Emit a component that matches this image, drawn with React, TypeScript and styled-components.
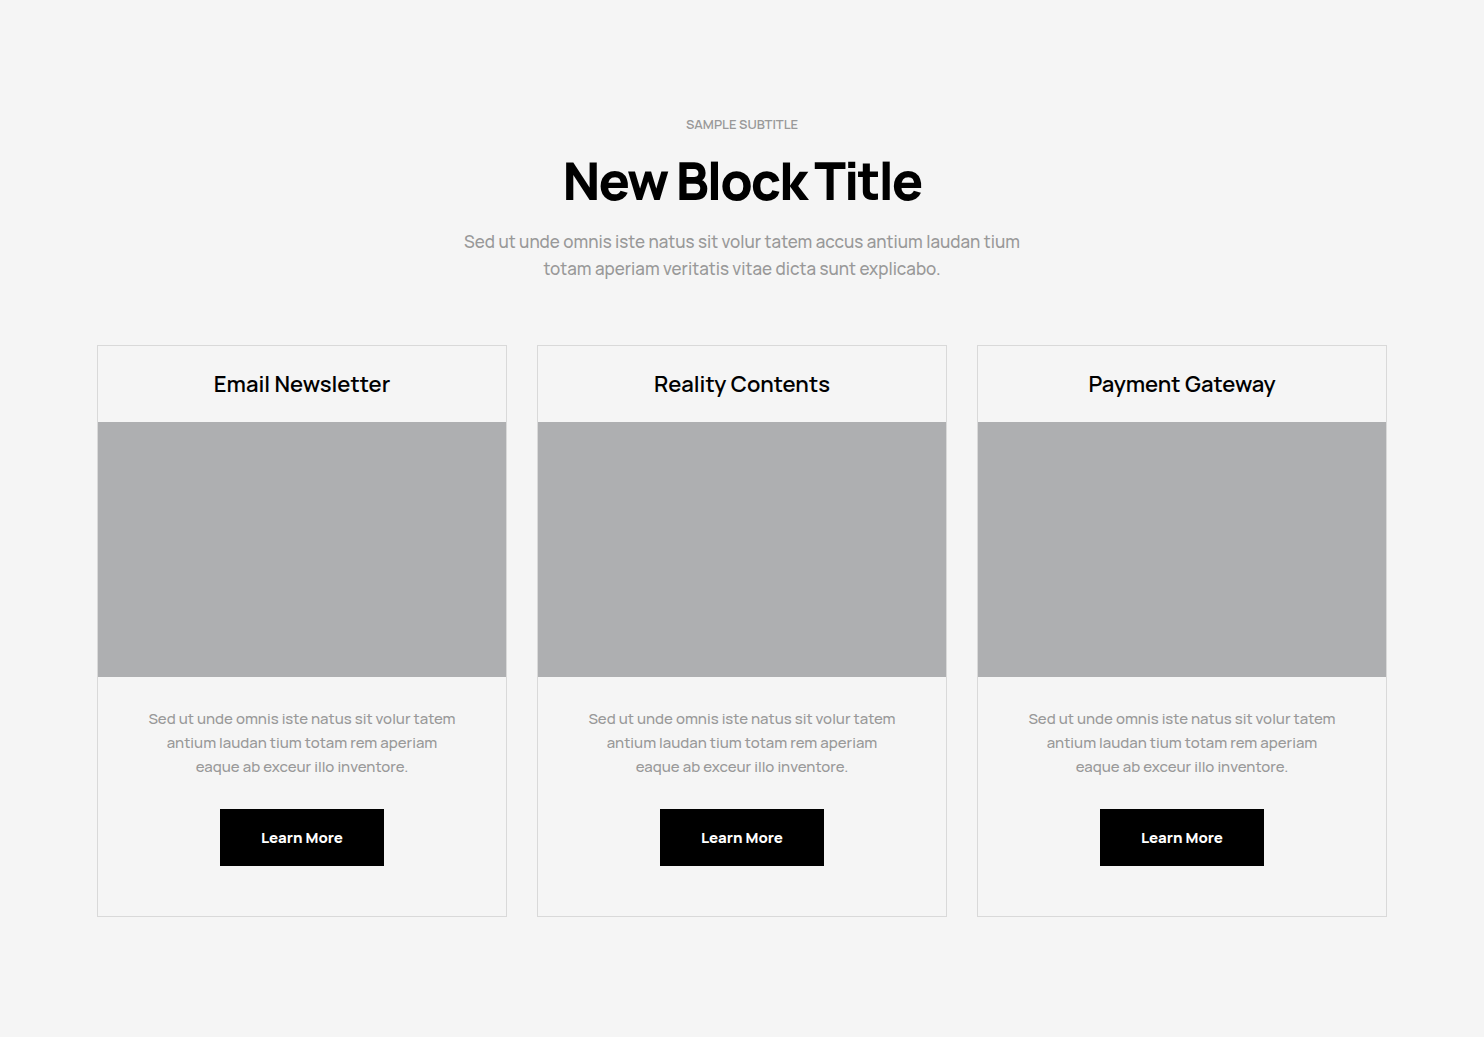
import React from "react";
import styled, { createGlobalStyle } from "styled-components";

const GlobalStyle = createGlobalStyle`
  *, *::before, *::after { box-sizing: border-box; }
  body {
    margin: 0;
    background: #f5f5f5;
    color: #000;
    font-family: Manrope, Inter, "Open Sans", sans-serif;
    font-variant-ligatures: none;
  }
`;

const Section = styled.section`
  padding: 112px 32px 120px;
`;

const Container = styled.div`
  max-width: 1290px;
  margin: 0 auto;
`;

const Header = styled.header`
  display: flex;
  flex-direction: column;
  align-items: center;
  max-width: 600px;
  margin: 0 auto 63px;
  text-align: center;
`;

const Subtitle = styled.p`
  margin: 0 0 15px;
  color: #999;
  font-size: 13px;
  font-weight: 600;
  line-height: 24px;
  text-transform: uppercase;
`;

const Title = styled.h2`
  margin: 0 0 17px;
  font-size: 52px;
  font-weight: 800;
  line-height: 60px;
  letter-spacing: -2px;
`;

const Lead = styled.p`
  margin: 0;
  color: #999;
  font-size: 17px;
  font-weight: 500;
  line-height: 27px;
`;

const Grid = styled.div`
  display: grid;
  grid-template-columns: repeat(auto-fit, minmax(300px, 1fr));
  gap: 30px;
`;

const Card = styled.article`
  display: flex;
  flex-direction: column;
  border: 1px solid #d9d9d9;
  text-align: center;
`;

const CardTitle = styled.h3`
  margin: 0;
  padding: 23px 24px;
  font-size: 22px;
  font-weight: 600;
  line-height: 30px;
`;

const Picture = styled.div`
  aspect-ratio: 8 / 5;
  background: #aeafb1;
`;

const CardBody = styled.div`
  display: flex;
  flex-direction: column;
  align-items: center;
  gap: 30px;
  padding: 30px 40px 50px;
`;

const CardText = styled.p`
  max-width: 310px;
  margin: 0;
  color: #999;
  font-size: 15px;
  font-weight: 500;
  line-height: 24px;
`;

const Button = styled.button`
  padding: 16px 41px;
  border: 0;
  background: #000;
  color: #fff;
  font-family: inherit;
  font-size: 15px;
  font-weight: 800;
  line-height: 25px;
  cursor: pointer;
`;

const cards = ["Email Newsletter", "Reality Contents", "Payment Gateway"];

export default function App() {
  return (
    <>
      <GlobalStyle />
      <Section>
        <Container>
          <Header>
            <Subtitle>Sample Subtitle</Subtitle>
            <Title>New Block Title</Title>
            <Lead>
              Sed ut unde omnis iste natus sit volur tatem accus antium laudan tium
              totam aperiam veritatis vitae dicta sunt explicabo.
            </Lead>
          </Header>
          <Grid>
            {cards.map((title) => (
              <Card key={title}>
                <CardTitle>{title}</CardTitle>
                <Picture />
                <CardBody>
                  <CardText>
                    Sed ut unde omnis iste natus sit volur tatem antium laudan tium
                    totam rem aperiam eaque ab exceur illo inventore.
                  </CardText>
                  <Button type="button">Learn More</Button>
                </CardBody>
              </Card>
            ))}
          </Grid>
        </Container>
      </Section>
    </>
  );
}
